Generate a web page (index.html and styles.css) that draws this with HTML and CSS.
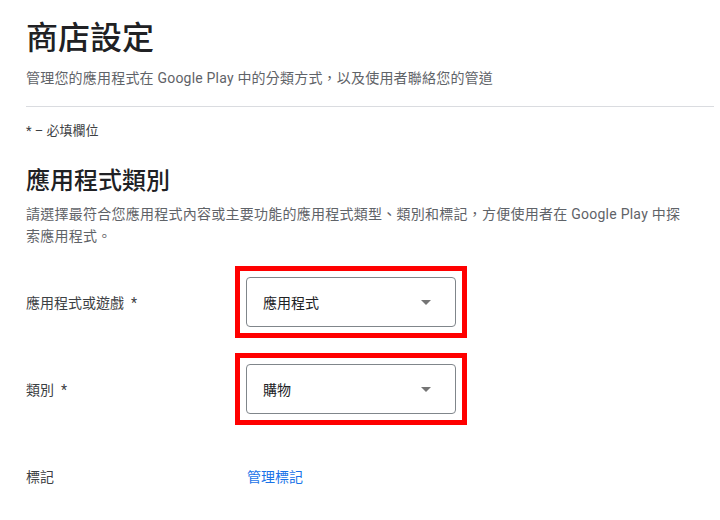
FILE: index.html
```html
<!DOCTYPE html>
<html lang="zh-Hant">
  <head>
    <meta name="viewport" content="width=device-width, initial-scale=1.0">
    <meta charset="utf-8">
    <title>商店設定</title>
    <link rel="stylesheet" href="styles.css">
  </head>
  <body>
    <main class="page">
      <h1 class="title">商店設定</h1>
      <p class="subtitle">管理您的應用程式在 Google Play 中的分類方式，以及使用者聯絡您的管道</p>
      <hr class="divider">
      <p class="note">* – 必填欄位</p>

      <section class="section">
        <h2 class="section-title">應用程式類別</h2>
        <p class="section-desc">請選擇最符合您應用程式內容或主要功能的應用程式類型、類別和標記，方便使用者在 Google Play 中探索應用程式。</p>

        <div class="form">
          <div class="row">
            <label class="label">應用程式或遊戲 &nbsp;*</label>
            <div class="control highlight">
              <div class="select">
                <span class="select-value">應用程式</span>
                <span class="caret"></span>
              </div>
            </div>
          </div>
          <div class="row">
            <label class="label">類別 &nbsp;*</label>
            <div class="control highlight">
              <div class="select">
                <span class="select-value">購物</span>
                <span class="caret"></span>
              </div>
            </div>
          </div>
          <div class="row">
            <label class="label">標記</label>
            <div class="control">
              <a class="link" href="#">管理標記</a>
            </div>
          </div>
        </div>
      </section>
    </main>
  </body>
</html>
```

FILE: styles.css
```css
*, *::before, *::after {
  box-sizing: border-box;
}

html, body {
  margin: 0;
  padding: 0;
  background: #fff;
  font-family: Roboto, "Noto Sans CJK TC", sans-serif;
  color: #3c4043;
}

h1, h2, p {
  margin: 0;
  padding: 0;
}

a {
  text-decoration: none;
}

.page {
  padding: 18px 6px 0 26px;
}

.title {
  font-size: 32px;
  line-height: 40px;
  font-weight: 500;
  color: #202124;
}

.subtitle {
  margin-top: 10px;
  font-size: 14px;
  line-height: 20px;
  letter-spacing: 0.2px;
  color: #5f6368;
}

.divider {
  margin: 18px 0 0;
  border: 0;
  border-top: 1px solid #dadce0;
  height: 0;
}

.note {
  margin-top: 14px;
  font-size: 13px;
  line-height: 20px;
  color: #3c4043;
}

.section {
  margin-top: 24px;
}

.section-title {
  font-size: 24px;
  line-height: 32px;
  font-weight: 500;
  color: #202124;
}

.section-desc {
  margin-top: 6px;
  max-width: 660px;
  font-size: 14px;
  line-height: 22px;
  letter-spacing: 0.25px;
  color: #5f6368;
}

.form {
  margin-top: 19px;
  display: flex;
  flex-direction: column;
  gap: 15px;
}

.row {
  display: flex;
  align-items: center;
  height: 72px;
}

.label {
  width: 209px;
  flex-shrink: 0;
  font-size: 14px;
  color: #3c4043;
}

.control {
  width: 232px;
}

.highlight {
  border: 5px solid #ff0000;
  padding: 6px;
}

.select {
  display: flex;
  align-items: center;
  justify-content: space-between;
  height: 50px;
  padding: 0 24px 0 16px;
  border: 1px solid #80868b;
  border-radius: 4px;
}

.select-value {
  font-size: 14px;
  color: #202124;
}

.caret {
  width: 0;
  height: 0;
  border-left: 5px solid transparent;
  border-right: 5px solid transparent;
  border-top: 5px solid #757575;
}

.link {
  display: inline-block;
  margin-left: 12px;
  font-size: 14px;
  color: #1a73e8;
}
```
